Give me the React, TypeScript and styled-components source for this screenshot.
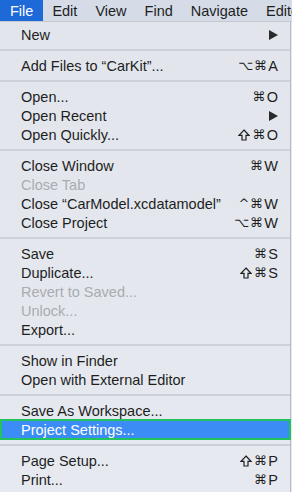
import styled, { createGlobalStyle } from "styled-components";

const GlobalStyle = createGlobalStyle`
    html, body {
        margin: 0;
        padding: 0;
        background: #e4e8ee;
        overflow: hidden;
    }
    * {
        box-sizing: border-box;
    }
`;

type Item = {
    label?: string;
    shift?: boolean;
    mods?: string;
    keyName?: string;
    submenu?: boolean;
    disabled?: boolean;
    selected?: boolean;
    sep?: boolean;
};

const items: Item[] = [
    { label: "New", submenu: true },
    { sep: true },
    { label: "Add Files to \u201CCarKit\u201D...", mods: "⌥⌘", keyName: "A" },
    { sep: true },
    { label: "Open...", mods: "⌘", keyName: "O" },
    { label: "Open Recent", submenu: true },
    { label: "Open Quickly...", shift: true, mods: "⌘", keyName: "O" },
    { sep: true },
    { label: "Close Window", mods: "⌘", keyName: "W" },
    { label: "Close Tab", disabled: true },
    { label: "Close \u201CCarModel.xcdatamodel\u201D", mods: "^⌘", keyName: "W" },
    { label: "Close Project", mods: "⌥⌘", keyName: "W" },
    { sep: true },
    { label: "Save", mods: "⌘", keyName: "S" },
    { label: "Duplicate...", shift: true, mods: "⌘", keyName: "S" },
    { label: "Revert to Saved...", disabled: true },
    { label: "Unlock...", disabled: true },
    { label: "Export..." },
    { sep: true },
    { label: "Show in Finder" },
    { label: "Open with External Editor" },
    { sep: true },
    { label: "Save As Workspace..." },
    { label: "Project Settings...", selected: true },
    { sep: true },
    { label: "Page Setup...", shift: true, mods: "⌘", keyName: "P" },
    { label: "Print...", mods: "⌘", keyName: "P" },
];

const menus = ["File", "Edit", "View", "Find", "Navigate", "Editor"];

const ShiftIcon = () => (
    <svg width="12" height="12" viewBox="0 0 12 12" style={{ marginRight: 2 }}>
        <path
            d="M6 1 L11 6.3 H8 V11 H4 V6.3 H1 Z"
            fill="none"
            stroke="#1e1e1e"
            strokeWidth="1.2"
            strokeLinejoin="miter"
        />
    </svg>
);

const App = () => {
    return (
        <>
            <GlobalStyle />
            <Screen>
                <MenuBar>
                    {menus.map((m, i) => (
                        <BarItem key={m} active={i === 0}>
                            {m}
                        </BarItem>
                    ))}
                </MenuBar>
                <Dropdown>
                    {items.map((it, i) =>
                        it.sep ? (
                            <Separator key={i} />
                        ) : (
                            <Row key={i} selected={it.selected}>
                                <Label disabled={it.disabled}>{it.label}</Label>
                                {it.keyName && (
                                    <Shortcut>
                                        {it.shift && <ShiftIcon />}
                                        <Mods>{it.mods}</Mods>
                                        {it.keyName}
                                    </Shortcut>
                                )}
                                {it.submenu && (
                                    <svg width="9" height="10" viewBox="0 0 9 10">
                                        <path d="M0 0 L9 5 L0 10 Z" fill="#2a2a2a" />
                                    </svg>
                                )}
                            </Row>
                        )
                    )}
                </Dropdown>
            </Screen>
        </>
    );
};

const Screen = styled.div`
    width: 292px;
    height: 492px;
    overflow: hidden;
    font-family: "Liberation Sans", Arial, sans-serif;
    font-size: 14.5px;
    background: #e4e8ee;
`;

const MenuBar = styled.div`
    display: flex;
    height: 22px;
    background: #d5dce7;
    border-bottom: 1px solid #c3c9d2;
    white-space: nowrap;
    overflow: hidden;
`;

const BarItem = styled.div<{ active?: boolean }>`
    display: flex;
    align-items: center;
    flex-shrink: 0;
    padding: 0 9px;
    color: ${(p) => (p.active ? "#ffffff" : "#1e1e1e")};
    background: ${(p) => (p.active ? "#1d69d7" : "transparent")};
    &:first-child {
        padding: 0 10px;
    }
`;

const Dropdown = styled.div`
    width: 291px;
    height: 470px;
    padding-top: 3px;
    background: linear-gradient(180deg, #e2e6ec 0%, #e6eaf0 100%);
    border-right: 1px solid #b8bdc5;
`;

const Row = styled.div<{ selected?: boolean }>`
    display: flex;
    align-items: center;
    justify-content: space-between;
    height: 19px;
    padding: 0 12px 0 21px;
    color: ${(p) => (p.selected ? "#ffffff" : "#1e1e1e")};
    background: ${(p) => (p.selected ? "#3b8cf4" : "transparent")};
    ${(p) =>
        p.selected &&
        `
        height: 21px;
        margin: -1px -1px -1px 0;
        border: 2px solid #20c35c;
        padding-left: 19px;
    `}
`;

const Label = styled.span<{ disabled?: boolean }>`
    white-space: nowrap;
    color: ${(p) => (p.disabled ? "#a9acb1" : "inherit")};
`;

const Shortcut = styled.span`
    display: flex;
    align-items: center;
    white-space: nowrap;
`;

const Mods = styled.span`
    font-family: "DejaVu Sans", sans-serif;
    font-size: 13px;
    letter-spacing: 0.5px;
    margin-right: 1px;
`;

const Separator = styled.div`
    height: 12px;
    display: flex;
    align-items: center;
    &::after {
        content: "";
        display: block;
        width: 100%;
        height: 2px;
        background: #ccd1d8;
    }
`;

export default App;
